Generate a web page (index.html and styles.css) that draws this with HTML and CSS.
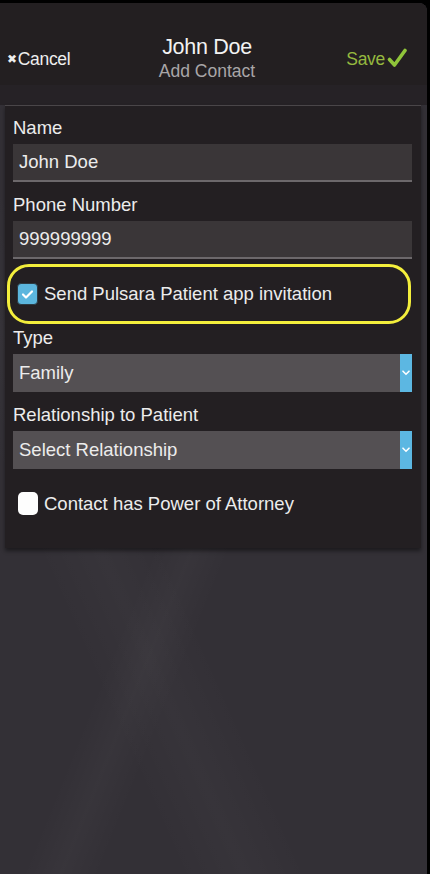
FILE: index.html
```html
<!DOCTYPE html>
<html>
<head>
<meta name="viewport" content="width=device-width, initial-scale=1">
<link rel="stylesheet" href="styles.css">
</head>
<body>

<div class="screen">
  <div class="header">
    <a class="cancel"><span class="cancel__x">&#10006;</span>Cancel</a>
    <div class="title">
      <div class="title__name">John Doe</div>
      <div class="title__sub">Add Contact</div>
    </div>
    <a class="save">Save
      <svg class="save__check" width="20" height="20" viewBox="0 0 20 20">
        <path d="M2.5 11.5 L7.5 17 L18 2.5" fill="none" stroke="#8fc43a" stroke-width="3.6" stroke-linecap="round" stroke-linejoin="round"/>
      </svg>
    </a>
  </div>

  <div class="card">
    <div class="label">Name</div>
    <div class="field">John Doe</div>

    <div class="label">Phone Number</div>
    <div class="field">999999999</div>

    <div class="invite">
      <span class="check check--on">
        <svg width="13" height="11" viewBox="0 0 13 11"><path d="M2 5.5 L5 8.5 L11 2.5" fill="none" stroke="#fff" stroke-width="2.2" stroke-linecap="round" stroke-linejoin="round"/></svg>
      </span>
      <span class="check-text">Send Pulsara Patient app invitation</span>
    </div>

    <div class="label">Type</div>
    <div class="select">
      <span class="select__value">Family</span>
      <span class="select__arrow"><svg width="8" height="6" viewBox="0 0 8 6"><path d="M1 1.2 L4 4.2 L7 1.2" fill="none" stroke="#fff" stroke-width="1.6" stroke-linecap="round"/></svg></span>
    </div>

    <div class="label">Relationship to Patient</div>
    <div class="select">
      <span class="select__value">Select Relationship</span>
      <span class="select__arrow"><svg width="8" height="6" viewBox="0 0 8 6"><path d="M1 1.2 L4 4.2 L7 1.2" fill="none" stroke="#fff" stroke-width="1.6" stroke-linecap="round"/></svg></span>
    </div>

    <div class="poa">
      <span class="check check--off"></span>
      <span class="check-text">Contact has Power of Attorney</span>
    </div>
  </div>
</div>

</body>
</html>
```

FILE: styles.css
```css
body {
  margin: 0;
  background: #000;
  font-family: "Liberation Sans", Arial, sans-serif;
  color: #ececec;
}

.screen {
  margin: 3px 3px 0 0;
  height: 871px;
  border-top-right-radius: 8px;
  overflow: hidden;
  background:
    linear-gradient(112deg, transparent 48%, rgba(255,255,255,0.025) 53%, transparent 58%),
    linear-gradient(66deg, transparent 22%, rgba(255,255,255,0.02) 30%, transparent 38%),
    #333036;
}

.header {
  height: 52px;
  background: #231f21;
  display: flex;
  align-items: center;
  justify-content: space-between;
  padding: 30px 20px 0 7px;
  border-bottom: 20px solid #262226;
}

.cancel {
  font-size: 17.5px;
  color: #eee;
  width: 110px;
  letter-spacing: -0.3px;
}

.cancel__x {
  font-size: 12px;
  margin-right: 1px;
  position: relative;
  top: -2px;
}

.title {
  text-align: center;
}

.title__name {
  font-size: 21.5px;
  color: #f2f2f2;
  line-height: 24px;
  letter-spacing: -0.3px;
}

.title__sub {
  font-size: 17.5px;
  color: #a9a6a8;
  line-height: 24px;
}

.save {
  font-size: 17.5px;
  color: #95b83f;
  width: 110px;
  display: flex;
  align-items: center;
  justify-content: flex-end;
  gap: 2px;
  letter-spacing: -0.3px;
}

.save__check {
  margin-top: -3px;
}

.card {
  margin: 0 6px 0 5px;
  background: #231f22;
  border-top: 1px solid #4a4649;
  padding: 11px 9px 33px 8px;
  box-shadow: 0 3px 4px rgba(0,0,0,0.45);
}

.label {
  font-size: 18.5px;
  line-height: 22px;
  margin-bottom: 5px;
}

.field {
  height: 36px;
  line-height: 36px;
  background: #3a3638;
  border-bottom: 2px solid #6c686b;
  padding-left: 6px;
  font-size: 18.5px;
  margin-bottom: 12px;
}

.field + .invite {
  margin-top: -7px;
}

.invite {
  margin: 0 1px 3px -6px;
  height: 54px;
  border: 3px solid #f3ee3c;
  border-radius: 22px;
  display: flex;
  align-items: center;
  padding-left: 7px;
}

.check {
  width: 21px;
  height: 22px;
  border-radius: 4px;
  display: flex;
  align-items: center;
  justify-content: center;
  box-sizing: border-box;
  margin-right: 6px;
}

.check--on {
  background: #5bb6de;
  border: 1px solid #2c3a42;
}

.check--off {
  background: #fdfdfd;
  width: 20px;
  height: 23px;
  border-radius: 5px;
}

.check-text {
  font-size: 18.5px;
}

.select {
  height: 38px;
  background: #545053;
  display: flex;
  align-items: center;
  justify-content: space-between;
  margin-bottom: 12px;
}

.select__value {
  padding-left: 6px;
  font-size: 18.5px;
}

.select__arrow {
  width: 12px;
  height: 38px;
  background: #5cb7e2;
  display: flex;
  align-items: center;
  justify-content: center;
}

.poa {
  display: flex;
  align-items: center;
  padding: 11px 0 0 5px;
}
```
